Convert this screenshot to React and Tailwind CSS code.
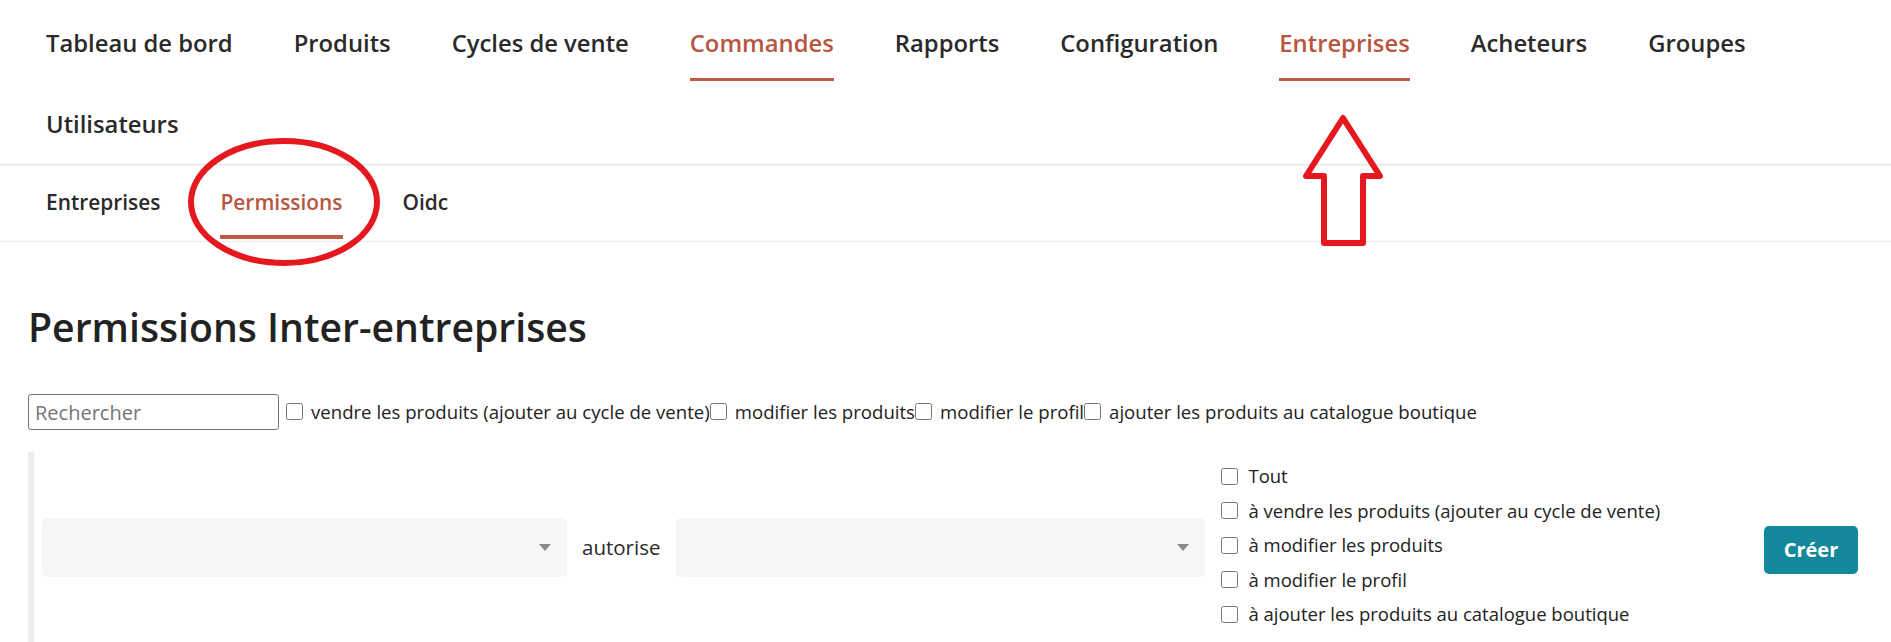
import React from 'react';

const TOP_NAV = [
  { label: 'Tableau de bord' },
  { label: 'Produits' },
  { label: 'Cycles de vente' },
  { label: 'Commandes', active: true },
  { label: 'Rapports' },
  { label: 'Configuration' },
  { label: 'Entreprises', active: true },
  { label: 'Acheteurs' },
  { label: 'Groupes' },
  { label: 'Utilisateurs' },
];

const SUB_NAV = [
  { label: 'Entreprises' },
  { label: 'Permissions', active: true },
  { label: 'Oidc' },
];

const FILTERS = [
  'vendre les produits (ajouter au cycle de vente)',
  'modifier les produits',
  'modifier le profil',
  'ajouter les produits au catalogue boutique',
];

const GRANTS = [
  'Tout',
  'à vendre les produits (ajouter au cycle de vente)',
  'à modifier les produits',
  'à modifier le profil',
  'à ajouter les produits au catalogue boutique',
];

function Select({ width }) {
  return (
    <div className={`${width} h-[59px] mt-[5px] rounded-[5px] bg-[#f5f6f8] flex items-center justify-end pr-[16px] shrink-0`}>
      {/* caret */}
      <svg width="12" height="8" viewBox="0 0 12 8">
        <path d="M0 0 L12 0 L6 7 Z" fill="#8a8a8a" />
      </svg>
    </div>
  );
}

export default function App() {
  return (
    <div className="relative w-[1891px] h-[642px] overflow-hidden bg-white text-[#262626]" style={{ fontFamily: '"Open Sans", "Noto Sans", sans-serif' }}>
      {/* top navigation */}
      <nav className="flex flex-wrap gap-x-[61px] pl-[46px] pr-[40px] pb-[2px] border-b border-[#e2e2e2] shadow-[0_1px_2px_rgba(0,0,0,0.06)]">
        {TOP_NAV.map((item) => (
          <div key={item.label} className="h-[81px] pt-[27px] flex flex-col items-stretch">
            <span className={`text-[23.8px] leading-[32px] font-semibold whitespace-nowrap ${item.active ? 'text-[#b9553f]' : 'text-[#2a2a2a]'}`}>
              {item.label}
            </span>
            {item.active && <div className="mt-[19px] h-[4px] bg-[#bf5a43]" />}
          </div>
        ))}
      </nav>

      {/* sub navigation */}
      <div className="flex gap-x-[60px] pl-[46px] pb-[2px] border-b border-[#ececec]">
        {SUB_NAV.map((item) => (
          <div key={item.label} className="h-[74px] pt-[22px] flex flex-col">
            <span className={`text-[20.9px] leading-[30px] font-semibold whitespace-nowrap ${item.active ? 'text-[#b9553f]' : 'text-[#2a2a2a]'}`}>
              {item.label}
            </span>
            {item.active && <div className="mt-[18px] h-[4px] bg-[#bf5a43]" />}
          </div>
        ))}
      </div>

      <h1 className="mt-[61px] ml-[28px] text-[39.2px] leading-[48px] font-semibold text-[#222222]">
        Permissions Inter-entreprises
      </h1>

      {/* filter row */}
      <div className="mt-[43px] ml-[28px] flex items-center text-[18.6px] font-medium text-[#222222]">
        <input
          type="text"
          placeholder="Rechercher"
          className="w-[251px] h-[36px] border border-[#767676] rounded-[3px] px-[6px] text-[20px] font-normal placeholder:text-[#767676] outline-none"
        />
        {FILTERS.map((f, i) => (
          <label key={f} className="flex items-center whitespace-nowrap">
            <input type="checkbox" className={`w-[17px] h-[17px] ${i === 0 ? 'ml-[7px]' : 'ml-0'} mr-[8px]`} />
            <span>{f}</span>
          </label>
        ))}
      </div>

      {/* create permission panel */}
      <div className="mt-[22px] ml-[28px] border-l-[6px] border-[#eeeeee] flex items-center pl-[8px] pt-[7px] pb-[14px]">
        <Select width="w-[525px]" />
        <span className="mt-[5px] ml-[15px] mr-[16px] text-[20.5px] text-[#2a2a2a]">autorise</span>
        <Select width="w-[529px]" />
        <div className="ml-[16px] flex flex-col text-[18.5px] font-medium text-[#222222]">
          {GRANTS.map((g) => (
            <label key={g} className="h-[34.5px] flex items-center whitespace-nowrap">
              <input type="checkbox" className="w-[17px] h-[17px] mr-[10px]" />
              <span>{g}</span>
            </label>
          ))}
        </div>
        <button className="mt-[9px] ml-auto mr-[33px] w-[94px] h-[48px] rounded-[5px] bg-[#13889a] text-white text-[20px] font-bold">
          Créer
        </button>
      </div>

      {/* annotations */}
      <svg className="absolute left-0 top-0 pointer-events-none" width="1891" height="642">
        <ellipse cx="284" cy="202" rx="93" ry="61" fill="none" stroke="#e5171f" strokeWidth="6" />
        <path
          d="M1343 118 L1380 176 L1363 176 L1363 243 L1324 243 L1324 176 L1306 176 Z"
          fill="none"
          stroke="#e5171f"
          strokeWidth="6"
          strokeLinejoin="round"
        />
      </svg>
    </div>
  );
}
